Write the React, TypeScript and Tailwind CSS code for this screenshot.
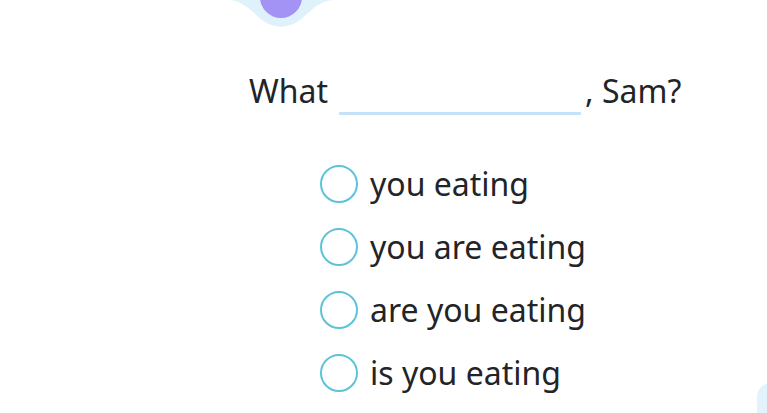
import React from 'react';

const options = ['you eating', 'you are eating', 'are you eating', 'is you eating'];

const App: React.FC = () => {
  return (
    <div className="relative w-[767px] h-[413px] overflow-hidden bg-white font-['Noto_Sans',sans-serif] text-[#222428]">
      {/* avatar blob at the top, cut off by the window */}
      <svg className="absolute left-[228px] top-0" width="106" height="30" viewBox="0 0 106 30">
        <path d="M0 0 C 14 0 22 10 34 20 C 46 29 60 29 72 20 C 84 10 92 0 106 0 Z" fill="#dff1fb" />
        <circle cx="53" cy="-3" r="21" fill="#a393f5" />
      </svg>

      <div className="flex flex-col pt-[71px]">
        <div className="flex items-end pl-[249px] text-[32px] leading-[40px]">
          <span>What</span>
          <span className="ml-[11px] mb-[-4px] h-[3px] w-[242px] self-end bg-[#c6e2f6]" />
          <span className="ml-[4px]">, Sam?</span>
        </div>

        <div className="mt-[54px] flex flex-col gap-[25px] pl-[320px]">
          {options.map((opt) => (
            <label key={opt} className="flex h-[38px] cursor-pointer items-center gap-[12px]">
              <span className="h-[38px] w-[38px] shrink-0 rounded-full border-2 border-[#5ec3d8]" />
              <span className="text-[32px] leading-[38px]">{opt}</span>
            </label>
          ))}
        </div>
      </div>

      <div className="absolute left-[757px] top-[383px] h-[60px] w-[40px] rounded-tl-[14px] bg-[#e3f3fb]" />
    </div>
  );
};

export default App;
